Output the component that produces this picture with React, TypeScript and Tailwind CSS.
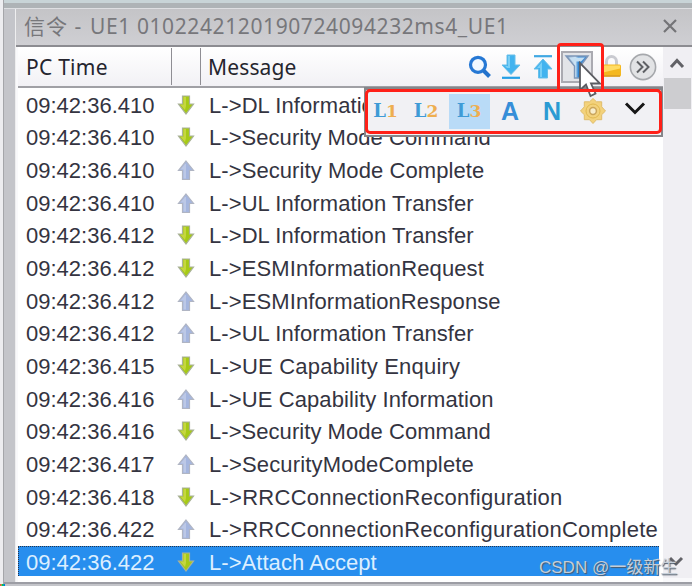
import React from "react";

type Direction = "down" | "up";

const rows: { time: string; dir: Direction; message: string; tracking: string }[] = [
  { time: "09:42:36.410", dir: "down", message: "L->DL Information Transfer", tracking: "tracking-[0.08px]" },
  { time: "09:42:36.410", dir: "down", message: "L->Security Mode Command", tracking: "tracking-[0.05px]" },
  { time: "09:42:36.410", dir: "up", message: "L->Security Mode Complete", tracking: "tracking-[0.08px]" },
  { time: "09:42:36.410", dir: "up", message: "L->UL Information Transfer", tracking: "tracking-[0.08px]" },
  { time: "09:42:36.412", dir: "down", message: "L->DL Information Transfer", tracking: "tracking-[0.08px]" },
  { time: "09:42:36.412", dir: "down", message: "L->ESMInformationRequest", tracking: "tracking-[0.12px]" },
  { time: "09:42:36.412", dir: "up", message: "L->ESMInformationResponse", tracking: "tracking-[0.1px]" },
  { time: "09:42:36.412", dir: "up", message: "L->UL Information Transfer", tracking: "tracking-[0.08px]" },
  { time: "09:42:36.415", dir: "down", message: "L->UE Capability Enquiry", tracking: "tracking-[0.2px]" },
  { time: "09:42:36.416", dir: "up", message: "L->UE Capability Information", tracking: "tracking-[0.1px]" },
  { time: "09:42:36.416", dir: "down", message: "L->Security Mode Command", tracking: "tracking-[0.05px]" },
  { time: "09:42:36.417", dir: "up", message: "L->SecurityModeComplete", tracking: "tracking-[0.17px]" },
  { time: "09:42:36.418", dir: "down", message: "L->RRCConnectionReconfiguration", tracking: "tracking-[0.26px]" },
  { time: "09:42:36.422", dir: "up", message: "L->RRCConnectionReconfigurationComplete", tracking: "tracking-[0.24px]" },
  { time: "09:42:36.422", dir: "down", message: "L->Attach Accept", tracking: "tracking-[0.05px]" },
];

function DirectionArrow({ dir }: { dir: Direction }) {
  return (
    <svg width="18" height="22" viewBox="0 0 18 22" className="block">
      {dir === "down" ? (
        <>
          <path d="M5.5 1h7v8h4L9 19 1.5 9h4z" fill="#a6ca16" stroke="#a9b19a" strokeWidth="1.2" />
          <path d="M6.5 2h2.5v9l-1 4-4.5-5.3h3z" fill="#c5d63f" />
        </>
      ) : (
        <>
          <path d="M9 1l7.5 9.5h-4v9h-7v-9h-4z" fill="#a5b6df" stroke="#b0b5c3" strokeWidth="1.2" />
          <path d="M8 4l-4.5 5.5h3v9H9V4z" fill="#bcc8e6" />
        </>
      )}
    </svg>
  );
}

function SearchIcon() {
  return (
    <svg width="24" height="24" viewBox="0 0 24 24">
      <circle cx="10" cy="9.8" r="7.5" fill="#f1f8ff" stroke="#2678d4" strokeWidth="3.2" />
      <path d="M15.5 15.5l6 6" stroke="#2372cc" strokeWidth="4" />
    </svg>
  );
}

function DownloadIcon() {
  return (
    <svg width="20" height="26" viewBox="0 0 20 26">
      <path d="M6 1h8v10h5l-9 9.5L1 11h5z" fill="#42b3ef" stroke="#68bfe9" />
      <path d="M7 2h2v12H6l-2-2h3z" fill="#79cff6" />
      <path d="M1 23.8h18" stroke="#249fe5" strokeWidth="2.2" />
    </svg>
  );
}

function UploadIcon() {
  return (
    <svg width="20" height="26" viewBox="0 0 20 26">
      <path d="M1 2.2h18" stroke="#40a8e3" strokeWidth="2.2" />
      <path d="M10 5l9 10h-4.5v9h-9v-9H1z" fill="#42b3ef" stroke="#68bfe9" />
      <path d="M9 8l-5 6h3v9h2z" fill="#79cff6" />
    </svg>
  );
}

function FilterIcon() {
  return (
    <svg width="26" height="28" viewBox="0 0 26 28">
      <defs>
        <linearGradient id="funnel">
          <stop offset="0" stopColor="#6f91ba" />
          <stop offset=".42" stopColor="#d5e9f8" />
          <stop offset=".56" stopColor="#2f83d0" />
          <stop offset="1" stopColor="#4c8fd2" />
        </linearGradient>
      </defs>
      <path d="M2 3h22l-7.5 10v12h-6V13z" fill="url(#funnel)" stroke="#7d96b8" strokeWidth="1.4" />
      <path d="M5 4.5h16l-4 4H8.5z" fill="#c5dff3" />
    </svg>
  );
}

function LockIcon() {
  return (
    <svg width="20" height="24" viewBox="0 0 20 24">
      <path d="M4.5 12V6.5a5 5 0 0 1 10 0V12" fill="none" stroke="#c9cad0" strokeWidth="3" />
      <rect x="0" y="9.5" width="19" height="12" rx="1.5" fill="#f4b820" />
      <path d="M1 10.5h17v3L1 17.5z" fill="#ffdc64" />
      <path d="M1 21h17" stroke="#d99b22" strokeWidth="1.5" />
    </svg>
  );
}

function MoreIcon() {
  return (
    <svg width="28" height="28" viewBox="0 0 28 28">
      <circle cx="14" cy="14" r="12.6" fill="#e2e3e5" stroke="#a6a8ac" strokeWidth="1.6" />
      <path d="M8 8.5l5.5 5.5L8 19.5M14 8.5l5.5 5.5-5.5 5.5" fill="none" stroke="#5e6064" strokeWidth="2" />
    </svg>
  );
}

function GearIcon() {
  return (
    <svg width="28" height="28" viewBox="0 0 28 28">
      <path
        d="M14 1.5l3.5 3.3h5.2v5L26.5 14l-3.8 3.7v5h-5.2L14 26.5l-3.5-3.8H5.3v-5L1.5 14l3.8-4.2v-5h5.2z"
        fill="#f3d27c"
        stroke="#e0bd6c"
        strokeWidth="1"
      />
      <circle cx="14" cy="14" r="7" fill="none" stroke="#e1b950" />
      <circle cx="14" cy="14" r="3.4" fill="#f8edcb" stroke="#caa55b" strokeWidth="1.5" />
    </svg>
  );
}

function LayerLabel({ level }: { level: string }) {
  return (
    <span className="flex items-baseline font-['DejaVu_Serif',serif] text-[18px] font-bold leading-none text-[#3f9bd6]">
      <span>L</span>
      <span className="text-[17px] text-[#eeae50]">{level}</span>
    </span>
  );
}

function FilterMenu() {
  return (
    <div className="absolute left-[364px] top-[87px] h-[50px] w-[299px] border-2 border-t-[3px] border-[#85868a] bg-[#f1f1f4]" />
  );
}

function FilterMenuItems() {
  return (
    <div className="absolute left-[364.5px] top-[88.5px] flex h-[45.5px] w-[297px] items-center rounded-[5px] border-[3.5px] border-[#ff2018]">
      <div className="flex w-[36px] shrink-0 justify-center"><LayerLabel level="1" /></div>
      <div className="flex w-[45px] shrink-0 justify-center"><LayerLabel level="2" /></div>
      <div className="flex h-[35px] w-[41px] shrink-0 items-center justify-center bg-[#b9dbf7]"><LayerLabel level="3" /></div>
      <div className="flex w-[41px] shrink-0 justify-center font-['Liberation_Sans',sans-serif] text-[25px] font-bold leading-none text-[#368ed8]">A</div>
      <div className="flex w-[43px] shrink-0 justify-center font-['Liberation_Sans',sans-serif] text-[25px] font-bold leading-none text-[#2b9bd3]">N</div>
      <div className="flex w-[38px] shrink-0 justify-center"><GearIcon /></div>
      <div className="flex flex-1 justify-center">
        <svg width="22" height="16" viewBox="0 0 22 16" className="mb-[5px]">
          <path d="M2 2.5l9 9 9-9" fill="none" stroke="#161616" strokeWidth="3" />
        </svg>
      </div>
    </div>
  );
}

export default function App() {
  return (
    <main className="relative flex h-[586px] w-[692px] overflow-hidden bg-[#c4c5ca] font-['Liberation_Sans','Noto_Sans_CJK_SC',sans-serif]">
      <div className="w-[4px] shrink-0 border-r border-[#a5a6aa] bg-[#ededf0]" />
      <div className="flex w-[688px] shrink-0 flex-col border-t-[3px] border-[#c8d4d7]">
        <div className="h-[6px] shrink-0 border-b border-[#dedfe2] bg-[#aeb3b6]" />
        <section className="ml-[11px] flex h-[573px] w-[677px] flex-col border-l border-[#eeeeef] bg-[#f9f9fb]">
          <header className="flex h-[36px] shrink-0 items-center justify-between bg-linear-to-b from-[#c4c4c7] to-[#cfcfd3] pl-[8px] pr-[14px]">
            <h1 className="flex whitespace-pre pb-[2px] font-['Noto_Sans','Noto_Sans_CJK_SC',sans-serif] text-[21px] leading-none text-[#77777b]">
              <span className="w-[66px] tracking-[1px]">信令 - </span>
              <span className="tracking-[0.6px]">UE1 0102242120190724094232ms4_UE1</span>
            </h1>
            <svg width="16" height="16" viewBox="0 0 16 16" className="mb-[2px]">
              <path d="M2 2l12 12M14 2L2 14" stroke="#747477" strokeWidth="2.2" />
            </svg>
          </header>
          <div className="flex min-h-0 flex-1 border-t-2 border-[#8c8c91]">
            <div className="ml-[2px] flex w-[645px] shrink-0 flex-col bg-white">
              <div className="flex h-[41px] shrink-0 border-b-2 border-[#a0a0a5] bg-linear-to-b from-white to-[#f2f1f5] font-['Noto_Sans',sans-serif] text-[21px] text-[#25252e]">
                <div className="my-[1px] flex w-[154px] items-center border-r border-[#8f8e94] pl-[8px] pt-[2px] tracking-[0.25px]">PC Time</div>
                <div className="my-[1px] w-[29px] border-r border-[#8f8e94]" />
                <div className="flex flex-1 items-center pl-[7px]">
                  <span className="w-[260px] shrink-0 pt-[2px] tracking-[0.15px]">Message</span>
                  <div className="flex items-center">
                    <SearchIcon />
                    <span className="ml-[9px]"><DownloadIcon /></span>
                    <span className="ml-[12px]"><UploadIcon /></span>
                    <span className="ml-[8px] flex h-[32px] w-[32px] items-center justify-center border-2 border-[#aaaab1] bg-[#e3e4e8]"><FilterIcon /></span>
                    <span className="ml-[9px]"><LockIcon /></span>
                    <span className="ml-[7px]"><MoreIcon /></span>
                  </div>
                </div>
              </div>
              <div className="flex h-[488px] shrink-0 flex-col pt-[1px] text-[22px] leading-none text-[#343441]">
                {rows.map((row, index) => {
                  const selected = index === rows.length - 1;
                  return (
                    <div
                      key={index}
                      className={`flex w-[641px] shrink-0 items-center ${
                        selected ? "h-[30px] border-l border-t border-dotted border-[#25344c] bg-[#278eee] pt-[2px] text-[#dcefff]" : "h-[32.67px] pl-px pt-px"
                      }`}
                    >
                      <span className="w-[150px] shrink-0 pl-[7px]">{row.time}</span>
                      <span className="w-[40px] shrink-0 pl-[8px]"><DirectionArrow dir={row.dir} /></span>
                      <span className={`whitespace-nowrap ${row.tracking}`}>{row.message}</span>
                    </div>
                  );
                })}
              </div>
            </div>
            <aside className="flex h-[531px] w-[29px] shrink-0 flex-col items-center bg-[#f0eff3]">
              <svg width="29" height="31" viewBox="0 0 29 31">
                <path d="M8 20l6-6.5 6 6.5" fill="none" stroke="#626267" strokeWidth="3" />
              </svg>
              <div className="h-[31px] w-[27px] bg-[#cdcdd0]" />
              <div className="flex-1" />
              <svg width="29" height="31" viewBox="0 0 29 31">
                <path d="M7 11l6 6 6-6" fill="none" stroke="#626267" strokeWidth="3" />
              </svg>
            </aside>
          </div>
        </section>
        <div className="h-[2px] shrink-0 bg-[#9c9da4]" />
      </div>

      <FilterMenu />
      <svg className="absolute left-[578px] top-[61px]" width="26" height="38" viewBox="0 0 26 38">
        <path d="M2 2v27l6-5.5 4.5 11.5 5-2.5-4.5-10h9z" fill="#fff" stroke="#5b5c62" strokeWidth="1.8" />
      </svg>
      <div className="absolute left-[556.5px] top-[43px] h-[48px] w-[47px] rounded-t-[4px] border-[3.5px] border-b-0 border-[#ff2018]" />
      <FilterMenuItems />
      <p className="absolute left-[539px] top-[558px] whitespace-nowrap text-[17px] leading-[20px] text-[#c5ced8] [text-shadow:1px_1px_1px_#4d5967]">CSDN @一级新生</p>
      <div className="absolute bottom-0 left-0 h-[2px] w-[5px] bg-linear-to-r from-red-500 via-green-500 to-blue-600" />
    </main>
  );
}
